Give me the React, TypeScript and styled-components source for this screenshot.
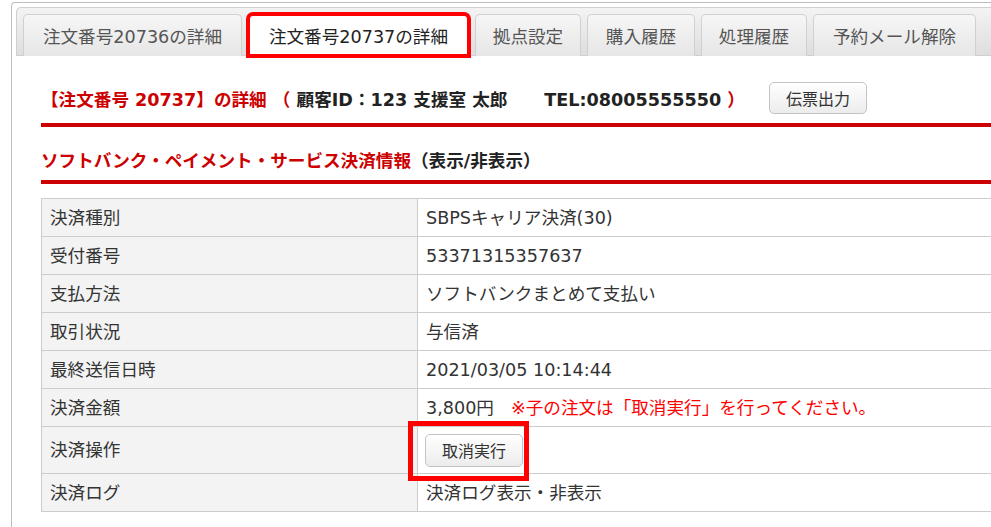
import React from "react";
import styled, { createGlobalStyle } from "styled-components";

const FONT = `"DejaVu Sans", "Noto Sans CJK JP", sans-serif`;

const Global = createGlobalStyle`
  html, body { margin: 0; padding: 0; background: #fff; overflow: hidden; }
  body { font-family: ${FONT}; color: #333; }
`;

const Page = styled.div`
  width: 1040px;
  padding: 2px 0 0 11px;
`;

const Panel = styled.div`
  border: 1px solid #bdbdbd;
  border-right: none;
  border-radius: 4px 0 0 0;
  padding: 4px 0 40px 4px;
`;

const TabBar = styled.div`
  display: flex;
  align-items: flex-end;
  gap: 6px;
  height: 49px;
  box-sizing: border-box;
  padding: 7px 0 0 6px;
  background: linear-gradient(#f3f3f3, #dedede);
  border: 1px solid #cfcfcf;
  border-radius: 5px 0 0 0;
  border-right: none;
`;

const Tab = styled.div<{ $active?: boolean; $w: number }>`
  position: relative;
  width: ${(p) => p.$w}px;
  height: 42px;
  box-sizing: border-box;
  display: flex;
  align-items: center;
  justify-content: center;
  white-space: nowrap;
  font-size: 17.6px;
  color: ${(p) => (p.$active ? "#222" : "#555")};
  background: ${(p) => (p.$active ? "#fff" : "linear-gradient(#f6f6f6, #e6e6e6)")};
  border: 1px solid ${(p) => (p.$active ? "#fff" : "#d0d0d0")};
  border-bottom: none;
  border-radius: 5px 5px 0 0;
  margin-bottom: -1px;
  outline: ${(p) => (p.$active ? "4px solid #ff0000" : "none")};
  outline-offset: -2px;
`;

const Content = styled.div`
  padding: 26px 0 0 25px;
`;

const TitleRow = styled.div`
  display: flex;
  align-items: center;
  height: 32px;
`;

const Title = styled.div`
  font-size: 17.6px;
  font-weight: bold;
  color: #222;
  white-space: pre;
`;

const Red = styled.span`
  color: #cc0000;
`;

const Button = styled.button`
  font-family: ${FONT};
  font-size: 16px;
  color: #333;
  height: 32px;
  padding: 0;
  white-space: nowrap;
  border: 1px solid #c3c3c8;
  border-radius: 5px;
  background: linear-gradient(#ffffff, #ececec);
  cursor: pointer;
`;

const HeaderButton = styled(Button)`
  margin-left: 24px;
  width: 98px;
`;

const RedLine = styled.div<{ $top: number }>`
  height: 4px;
  background: #cc0000;
  margin-top: ${(p) => p.$top}px;
`;

const SectionTitle = styled.div`
  height: 53px;
  box-sizing: border-box;
  padding-top: 23px;
  line-height: 22px;
  font-size: 17.6px;
  font-weight: bold;
  color: #222;
`;

const Table = styled.table`
  margin-top: 14px;
  width: 100%;
  border-collapse: collapse;
  font-size: 17.6px;
  color: #333;
`;

const Row = styled.tr<{ $h?: number }>`
  height: ${(p) => p.$h ?? 38}px;
`;

const Label = styled.td`
  width: 367px;
  background: #f2f3f2;
  border: 1px solid #cccccc;
  padding: 0 0 0 8px;
  line-height: 22px;
`;

const Value = styled.td`
  border: 1px solid #cccccc;
  padding: 0 0 0 8px;
  line-height: 22px;
`;

const Note = styled.span`
  color: #ff0000;
  margin-left: 17px;
`;

const Highlight = styled.span`
  position: relative;
  display: inline-flex;
  vertical-align: middle;
  margin-left: -1px;
  &::before {
    content: "";
    position: absolute;
    top: -13px;
    right: -6px;
    bottom: -14px;
    left: -17px;
    border: 5px solid #ff0000;
    pointer-events: none;
  }
`;

const CancelButton = styled(Button)`
  width: 98px;
  height: 33px;
`;

const rows: [string, React.ReactNode][] = [
  ["決済種別", "SBPSキャリア決済(30)"],
  ["受付番号", "53371315357637"],
  ["支払方法", "ソフトバンクまとめて支払い"],
  ["取引状況", "与信済"],
  ["最終送信日時", "2021/03/05 10:14:44"],
  [
    "決済金額",
    <>
      3,800円<Note>※子の注文は「取消実行」を行ってください。</Note>
    </>,
  ],
];

export default function App() {
  return (
    <>
      <Global />
      <Page>
        <Panel>
          <TabBar>
            <Tab $w={219}>注文番号20736の詳細</Tab>
            <Tab $w={221} $active>
              注文番号20737の詳細
            </Tab>
            <Tab $w={106}>拠点設定</Tab>
            <Tab $w={108}>購入履歴</Tab>
            <Tab $w={106}>処理履歴</Tab>
            <Tab $w={163}>予約メール解除</Tab>
          </TabBar>
          <Content>
            <TitleRow>
              <Title>
                <Red>【注文番号 20737】の詳細</Red> <Red>（</Red> 顧客ID：123 支援室 太郎{"      "}TEL:08005555550 <Red>）</Red>
              </Title>
              <HeaderButton>伝票出力</HeaderButton>
            </TitleRow>
            <RedLine $top={9} />
            <SectionTitle>
              <Red>ソフトバンク・ペイメント・サービス決済情報</Red>（表示/非表示）
            </SectionTitle>
            <RedLine $top={0} />
            <Table>
              <tbody>
                {rows.map(([k, v]) => (
                  <Row key={k}>
                    <Label>{k}</Label>
                    <Value>{v}</Value>
                  </Row>
                ))}
                <Row $h={47}>
                  <Label>決済操作</Label>
                  <Value>
                    <Highlight>
                      <CancelButton>取消実行</CancelButton>
                    </Highlight>
                  </Value>
                </Row>
                <Row>
                  <Label>決済ログ</Label>
                  <Value>決済ログ表示・非表示</Value>
                </Row>
              </tbody>
            </Table>
          </Content>
        </Panel>
      </Page>
    </>
  );
}
